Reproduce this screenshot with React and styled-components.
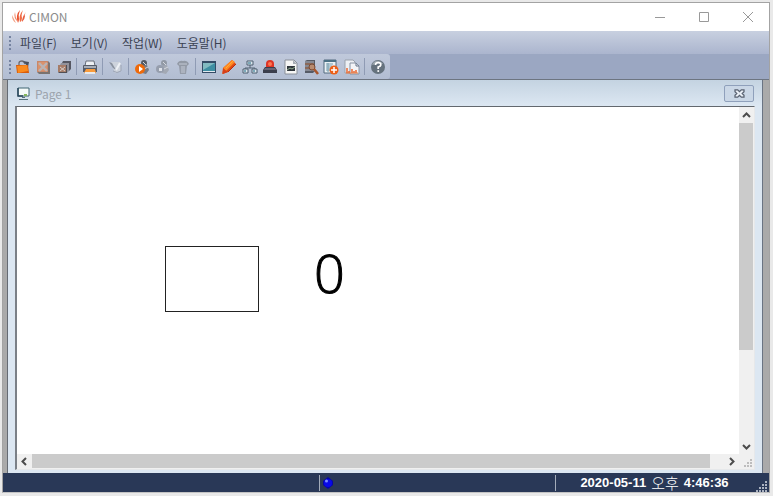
import styled, { createGlobalStyle } from 'styled-components'

const GlobalStyle = createGlobalStyle`
  * {
    box-sizing: border-box;
  }
  body {
    margin: 0;
    background: #e9e9e9;
    font-family: 'Noto Sans CJK KR', 'Noto Sans', sans-serif;
    font-size: 12px;
  }
  button {
    margin: 0;
    padding: 0;
    border: 0;
    background: none;
    font: inherit;
    color: inherit;
  }
`

const Screen = styled.div`
  display: flex;
  min-height: 100vh;
  padding: 2px 3px 3px 2px;
`

const Window = styled.div`
  flex: 1;
  display: flex;
  flex-direction: column;
  min-width: 0;
  border: 1px solid #a3a3a3;
  border-bottom-color: #c4c4c4;
`

const TitleBar = styled.header`
  display: flex;
  align-items: center;
  height: 28px;
  padding-left: 8px;
  gap: 2px;
  background: #fff;
  color: #8c8c8c;
`

const AppName = styled.h1`
  flex: 1;
  margin: 0;
  font-size: 12px;
  line-height: 16px;
  font-weight: normal;
`

const WindowButton = styled.button`
  display: flex;
  align-items: center;
  justify-content: center;
  width: 42px;
  height: 28px;
`

const MenuBar = styled.nav`
  display: flex;
  align-items: center;
  height: 23px;
  padding-left: 6px;
  background: linear-gradient(#c8d0e0, #abb5ce);
  color: #3a4152;
`

const MenuItem = styled.button`
  margin-left: ${(props) => (props.$first ? '9px' : '14px')};
  line-height: 16px;
`

const Grip = styled.span`
  width: 2px;
  height: 14px;
  background: repeating-linear-gradient(#7583a0 0 2px, transparent 2px 4px);
`

const ToolRow = styled.div`
  display: flex;
  height: 25px;
  background: #9ba7c2;
`

const ToolBar = styled.div`
  display: flex;
  align-items: center;
  gap: 4px;
  width: 387px;
  padding: 0 4px 0 6px;
  border-radius: 0 3px 3px 0;
  background: linear-gradient(#c0c9db, #b2bdd2);
`

const Tools = styled.div`
  flex: 1;
  display: flex;
  align-items: center;
  justify-content: space-between;
`

const Tool = styled.button`
  width: 16px;
  height: 16px;
  svg {
    display: block;
  }
`

const ToolDivider = styled.span`
  width: 1px;
  height: 17px;
  background: #8f9bb4;
`

const Workspace = styled.main`
  flex: 1;
  display: flex;
  padding: 0 6px 0 4px;
  background: #aaa;
  border-top: 1px solid #6d7581;
`

const Child = styled.section`
  flex: 1;
  display: flex;
  flex-direction: column;
  min-width: 0;
  padding: 0 7px 3px;
  border-left: 1px solid #656b73;
  border-right: 1px solid #6a7483;
  background: linear-gradient(#c4d3e1, #dce7f2 26px);
`

const ChildTitle = styled.div`
  display: flex;
  align-items: center;
  gap: 5px;
  height: 26px;
  padding: 1px 1px 0 2px;
  color: #9ca4ad;
`

const ChildName = styled.h2`
  flex: 1;
  margin: 0;
  font-size: 12px;
  line-height: 16px;
  font-weight: normal;
`

const ChildClose = styled.button`
  display: flex;
  align-items: center;
  justify-content: center;
  width: 30px;
  height: 17px;
  border: 1px solid #8fa0bb;
  border-radius: 2px;
  background: #cad7e6;
`

const View = styled.div`
  flex: 1;
  display: grid;
  grid-template-columns: 1fr 15px;
  grid-template-rows: 1fr 15px;
  border: 1px solid #e6e8ea;
  border-top-color: #63686e;
  border-left: 2px solid #7b8087;
  background: #fff;
`

const Canvas = styled.div`
  position: relative;
  overflow: hidden;
  background: #fff;
`

const Shape = styled.div`
  position: absolute;
  left: 148px;
  top: 139px;
  width: 94px;
  height: 66px;
  border: 1px solid #222;
`

const TagValue = styled.div`
  position: absolute;
  left: 297px;
  top: 133px;
  font-family: 'Open Sans', 'Noto Sans', sans-serif;
  font-size: 54px;
  font-weight: 300;
  line-height: 64px;
  color: #000;
  -webkit-text-stroke: 1px #000;
`

const ScrollBar = styled.div`
  display: flex;
  flex-direction: ${(props) => (props.$vertical ? 'column' : 'row')};
  background: #f0f0f0;
`

const ScrollArrow = styled.button`
  display: flex;
  align-items: center;
  justify-content: center;
  width: 15px;
  height: ${(props) => (props.$vertical ? '16px' : '15px')};
`

const ScrollTrack = styled.div`
  flex: 1;
  display: flex;
  flex-direction: inherit;
`

const ScrollThumb = styled.span`
  flex: 0 0 ${(props) => props.$size};
  margin: ${(props) => (props.$vertical ? '0 1px 0 0' : '0 0 1px')};
  background: #cbcbcb;
`

const Corner = styled.div`
  display: flex;
  align-items: flex-end;
  justify-content: flex-end;
  padding: 2px;
  background: #f0f0f0;
`

const StatusBar = styled.footer`
  display: flex;
  align-items: center;
  height: 19px;
  padding-right: 2px;
  background: #293857;
  color: #fff;
`

const StatusPane = styled.div`
  flex: ${(props) => props.$grow};
  display: flex;
  align-items: center;
  height: 16px;
  padding-left: 2px;
  border-right: 1px solid #a3acba;
`

const Clock = styled.time`
  display: flex;
  align-items: center;
  justify-content: center;
  gap: 5px;
  width: 200px;
  padding-right: 3px;
  font-size: 15px;
  font-weight: 300;
  line-height: 18px;
`

const Digits = styled.b`
  font-family: 'Liberation Sans', sans-serif;
  font-size: 13px;
  font-weight: bold;
`

const GripWrap = styled.span`
  align-self: flex-end;
  height: 14px;
`

const icons = {
  open: (
    <>
      <path d="M4 7V4q0-2 3-2 2 0 3 3" fill="none" stroke="#6b6970" strokeWidth="1.3" />
      <path d="M8 2l6 1-1 5z" fill="#49505d" />
      <path d="M1 6h12l1 8H2z" fill="#d95c0b" />
      <path d="M2 7l10-1 1 6-10 2z" fill="#fb8a1c" />
    </>
  ),
  close: (
    <>
      <path d="M2 2h11l2 2v11H4l-2-2z" fill="#7a7370" />
      <path d="M2 2h11v11H2z" fill="#c98768" />
      <path d="M3 3h9v9H3z" fill="#d9926d" />
      <path d="M4 4l8 8M12 4l-8 8" stroke="#b9b4b5" strokeWidth="2.4" />
    </>
  ),
  closeAll: (
    <>
      <path d="M7 2h8v8l-2 2V4H6z" fill="#555761" />
      <path d="M5 4h8v8l-2 2V6H4z" fill="#92929b" />
      <path d="M3 6h8v8H3l-1-1z" fill="#514f54" />
      <path d="M2 6h8v7H2z" fill="#a67c68" />
      <path d="M4 8l5 4M9 8l-5 4" stroke="#d6cec9" />
    </>
  ),
  print: (
    <>
      <path d="M4 2h8l1 5H3z" fill="#eef1f5" stroke="#686f7b" />
      <path d="M1 7q0-1 1-1h12q1 0 1 1v6H1z" fill="#555c69" />
      <path d="M2 7h12v2H2z" fill="#a7adb7" />
      <path d="M4 10h9l1 4H2z" fill="#fa9c3c" />
      <path d="M3 13h10v2H3z" fill="#e7e9ec" />
    </>
  ),
  edit: (
    <>
      <path d="M3 3h9l1 9-6 2-2-5z" fill="#cdd3dc" />
      <path d="M1 3l3 1 4 7-3-2z" fill="#8a929f" />
      <path d="M12 4l-4 7" stroke="#eef1f5" strokeWidth="2" />
      <path d="M5 12q4 3 8 0V6" stroke="#9ea6b5" fill="none" />
    </>
  ),
  run: (
    <>
      <circle cx="10" cy="4" r="3" fill="#555b66" />
      <path d="M8 7l5-1 2 5-3 4-4-1z" fill="#777c86" />
      <path d="M9 3l3 3M10 10l4-2" stroke="#d5d8df" />
      <circle cx="6" cy="10" r="5" fill="#ee6a0c" />
      <path d="M5 7l4 3-4 3z" fill="#fff" />
    </>
  ),
  stop: (
    <>
      <circle cx="10" cy="4" r="3" fill="#9299a5" />
      <path d="M8 7l5-1 2 5-3 4-4-1z" fill="#a3a9b4" />
      <path d="M9 3l3 3M10 10l4-2" stroke="#d5d8df" />
      <circle cx="6" cy="10" r="4" fill="#969ead" />
      <path d="M5 9h3v3H5z" fill="#dde1e8" />
    </>
  ),
  trash: (
    <>
      <path d="M2 5q2-4 6-3 4-1 6 3l-2 2H4z" fill="#9299a5" />
      <path d="M4 7h8l-1 8H5z" fill="#959ca9" />
      <path d="M7 7v7M9 7v7M4 5h8" stroke="#c3c9d5" />
    </>
  ),
  monitor: (
    <>
      <path d="M1 2h14v12H1z" fill="#344b66" />
      <path d="M2 4h12v8H2z" fill="#3e8ea2" />
      <path d="M2 4h12L2 11z" fill="#82bac1" />
      <path d="M2 12h12v1H2z" fill="#e2e9ef" />
    </>
  ),
  tag: (
    <>
      <path d="M11 1l4 4-8 8-6 2 1-6z" fill="#de4b14" />
      <path d="M11 1l3 2-9 9-3-3z" fill="#ff8a21" />
      <path d="M2 9l2 2 3 2-5 2z" fill="#d6401c" />
      <path d="M5 9l7-7" stroke="#ffa83c" />
      <path d="M7 13l8-8" stroke="#b92e12" />
    </>
  ),
  network: (
    <>
      <path d="M8 6v3M3 11V9h10v2" fill="none" stroke="#536273" />
      <path d="M5 2h6v4H5zM1 10h5v4H1zM10 10h5v4h-5z" fill="#dce5ed" stroke="#4d5e70" />
      <path d="M6 3h3v2H6zM2 11h2v2H2zM11 11h2v2h-2z" fill="#7ba8b8" />
    </>
  ),
  alarm: (
    <>
      <path d="M4 9V5q0-4 4-4t4 4v4z" fill="#df3525" />
      <circle cx="8" cy="5" r="2" fill="#ff7551" />
      <path d="M3 8h10l2 3v3H1v-3z" fill="#3b3e4c" />
      <path d="M3 9h10l1 2H2z" fill="#686575" />
    </>
  ),
  report: (
    <>
      <path d="M2 1h9l3 3v11H2z" fill="#f6f6f5" stroke="#8a9099" />
      <path d="M10 1l4 4h-4z" fill="#a7adb5" />
      <path d="M4 7h8v5H4z" fill="#30363c" />
      <path d="M4 11l3-2 2 1 3-2" fill="none" stroke="#91ad8f" />
    </>
  ),
  database: (
    <>
      <path d="M2 2l2-1h8v11l-2 2H2z" fill="#565b66" />
      <path d="M2 3h9M2 7h9M2 11h9" stroke="#b6b8c0" />
      <path d="M2 5h9M2 9h9" stroke="#bf784f" />
      <circle cx="9" cy="8" r="3" fill="#b88b70" stroke="#784a34" />
      <path d="M11 10l4 5" stroke="#a8552b" strokeWidth="2.5" />
    </>
  ),
  recipe: (
    <>
      <path d="M1 1h12v13H1z" fill="#e9f0f4" stroke="#526b7e" />
      <path d="M1 2h12" stroke="#4c7185" strokeWidth="2" />
      <path d="M3 5h7M3 7h6M3 9h5M3 11h5M5 4v9" stroke="#779eaf" />
      <circle cx="11" cy="11" r="4.5" fill="#ec5e16" />
      <path d="M8 11h6M11 8v6" stroke="#fff" strokeWidth="1.5" />
    </>
  ),
  chart: (
    <>
      <path d="M1 1h8l2 2v11H1z" fill="#edf0f4" stroke="#9ba2ad" />
      <path d="M6 4h6l3 3v8H6z" fill="#f3f4f7" stroke="#8892a3" />
      <path d="M12 4v3h3" fill="none" stroke="#67748a" />
      <path d="M3 9v5M5 12v2M8 10v4M10 12v2M12 11v3" stroke="#e85d25" strokeWidth="1.4" />
      <path d="M2 14h12" stroke="#e87d45" />
    </>
  ),
  help: (
    <>
      <circle cx="8" cy="8" r="7" fill="#65727d" />
      <path d="M2 6q2-5 7-4 3 1 4 3-5-1-11 1z" fill="#9ca7af" />
      <path d="M5.5 6q0-2.5 2.7-2.5t2.6 2.3Q10.7 7.5 8.2 8v2" fill="none" stroke="#fff" strokeWidth="1.7" />
      <path d="M7.4 11.2h1.7v1.7H7.4z" fill="#fff" />
    </>
  ),
}

const toolGroups = [
  [['open', '열기'], ['close', '닫기'], ['closeAll', '모두 닫기']],
  [['print', '인쇄']],
  [['edit', '편집']],
  [['run', '실행'], ['stop', '정지'], ['trash', '삭제']],
  [
    ['monitor', '화면'],
    ['tag', '태그'],
    ['network', '네트워크'],
    ['alarm', '경보'],
    ['report', '보고서'],
    ['database', '데이터베이스'],
    ['recipe', '레시피'],
    ['chart', '차트'],
  ],
  [['help', '도움말']],
]

const menus = ['파일(F)', '보기(V)', '작업(W)', '도움말(H)']

const Logo = () => (
  <svg width="16" height="16" viewBox="0 0 16 16">
    <path d="M1 6q2 4 4 8Q1 12 1 6z" fill="#f4a184" />
    <path d="M4 3q0 5 3 10Q2 9 4 3z" fill="#f08a6b" />
    <path d="M9 1Q4 6 7 14q1-2 1-4-1-4 1-9z" fill="#e9532f" />
    <path d="M12 1Q7 7 9 13q2-1 2-4-1-3 1-8z" fill="#f06b43" />
    <path d="M15 3q-4 5-4 10 3-3 3-6-1-1 1-4z" fill="#e85b3c" />
  </svg>
)

const Arrow = ({ turn }) => (
  <svg width="9" height="9" viewBox="0 0 9 9">
    <path d="M1 6l3.5-3.5L8 6" fill="none" stroke="#4c4c4c" strokeWidth="2" transform={`rotate(${turn} 4.5 4.5)`} />
  </svg>
)

const SizeGrip = ({ color }) => (
  <svg width="11" height="11" viewBox="0 0 11 11" fill={color}>
    <path d="M9 0h2v2H9zM6 3h2v2H6zM9 3h2v2H9zM3 6h2v2H3zM6 6h2v2H6zM9 6h2v2H9zM0 9h2v2H0zM3 9h2v2H3zM6 9h2v2H6zM9 9h2v2H9z" />
  </svg>
)

const Toolbar = () => (
  <ToolRow>
    <ToolBar role="toolbar">
      <Grip />
      <Tools>
        {toolGroups.map((group, i) => [
          i > 0 && <ToolDivider key={`divider-${i}`} />,
          ...group.map(([name, label]) => (
            <Tool key={name} aria-label={label}>
              <svg width="16" height="16" viewBox="0 0 16 16">{icons[name]}</svg>
            </Tool>
          )),
        ])}
      </Tools>
    </ToolBar>
  </ToolRow>
)

const PageWindow = () => (
  <Child>
    <ChildTitle>
      <svg width="13" height="14" viewBox="0 0 13 14">
        <path d="M1 1h11v8H1z" fill="#f4faf9" stroke="#3f6572" />
        <path d="M1 1v8h5" fill="none" stroke="#28475b" strokeWidth="1.5" />
        <path d="M7 7h3v2H7z" fill="#83b65b" />
        <path d="M5 10h3v1H5zM2 12h9v1H2z" fill="#55717b" />
      </svg>
      <ChildName>Page 1</ChildName>
      <ChildClose aria-label="페이지 닫기">
        <svg width="11" height="9" viewBox="0 0 12 10">
          <path d="M1 1h3l2 2 2-2h3v2L9 5l2 2v2H8L6 7 4 9H1V7l2-2-2-2z" fill="#e8eef5" stroke="#5a6372" strokeWidth="1.4" />
        </svg>
      </ChildClose>
    </ChildTitle>
    <View>
      <Canvas>
        <Shape />
        <TagValue>0</TagValue>
      </Canvas>
      <ScrollBar $vertical>
        <ScrollArrow $vertical aria-label="위로"><Arrow turn={0} /></ScrollArrow>
        <ScrollTrack><ScrollThumb $vertical $size="72%" /></ScrollTrack>
        <ScrollArrow $vertical aria-label="아래로"><Arrow turn={180} /></ScrollArrow>
      </ScrollBar>
      <ScrollBar>
        <ScrollArrow aria-label="왼쪽으로"><Arrow turn={270} /></ScrollArrow>
        <ScrollTrack><ScrollThumb $size="98%" /></ScrollTrack>
        <ScrollArrow aria-label="오른쪽으로"><Arrow turn={90} /></ScrollArrow>
      </ScrollBar>
      <Corner>
        <svg width="8" height="8" viewBox="0 0 8 8" fill="#bdbdbd">
          <path d="M6 0h2v2H6zM3 3h2v2H3zM6 3h2v2H6zM0 6h2v2H0zM3 6h2v2H3zM6 6h2v2H6z" />
        </svg>
      </Corner>
    </View>
  </Child>
)

const App = () => {
  return (
    <>
      <GlobalStyle />
      <Screen>
        <Window>
          <TitleBar>
            <Logo />
            <AppName>CIMON</AppName>
            <WindowButton aria-label="최소화">
              <svg width="10" height="10" stroke="#999"><path d="M0 5.5h10" /></svg>
            </WindowButton>
            <WindowButton aria-label="최대화">
              <svg width="10" height="10" stroke="#999" fill="none"><path d="M.5.5h9v9h-9z" /></svg>
            </WindowButton>
            <WindowButton aria-label="닫기">
              <svg width="10" height="10" stroke="#999"><path d="M0 0l10 10M10 0L0 10" /></svg>
            </WindowButton>
          </TitleBar>
          <MenuBar>
            <Grip />
            {menus.map((menu, i) => (
              <MenuItem key={menu} $first={i === 0}>{menu}</MenuItem>
            ))}
          </MenuBar>
          <Toolbar />
          <Workspace>
            <PageWindow />
          </Workspace>
          <StatusBar>
            <StatusPane $grow={317} />
            <StatusPane $grow={236}>
              <svg width="12" height="12" viewBox="0 0 12 12">
                <path d="M6 0l5 4v4l-5 4-5-4V4z" fill="#0505a8" />
                <circle cx="6" cy="6" r="4" fill="#0909e8" />
                <circle cx="4.5" cy="4" r="1.5" fill="#7a8cff" />
              </svg>
            </StatusPane>
            <Clock dateTime="2020-05-11T16:46:36">
              <Digits>2020-05-11</Digits>
              <span>오후</span>
              <Digits>4:46:36</Digits>
            </Clock>
            <GripWrap><SizeGrip color="#aab2c0" /></GripWrap>
          </StatusBar>
        </Window>
      </Screen>
    </>
  )
}

export default App
